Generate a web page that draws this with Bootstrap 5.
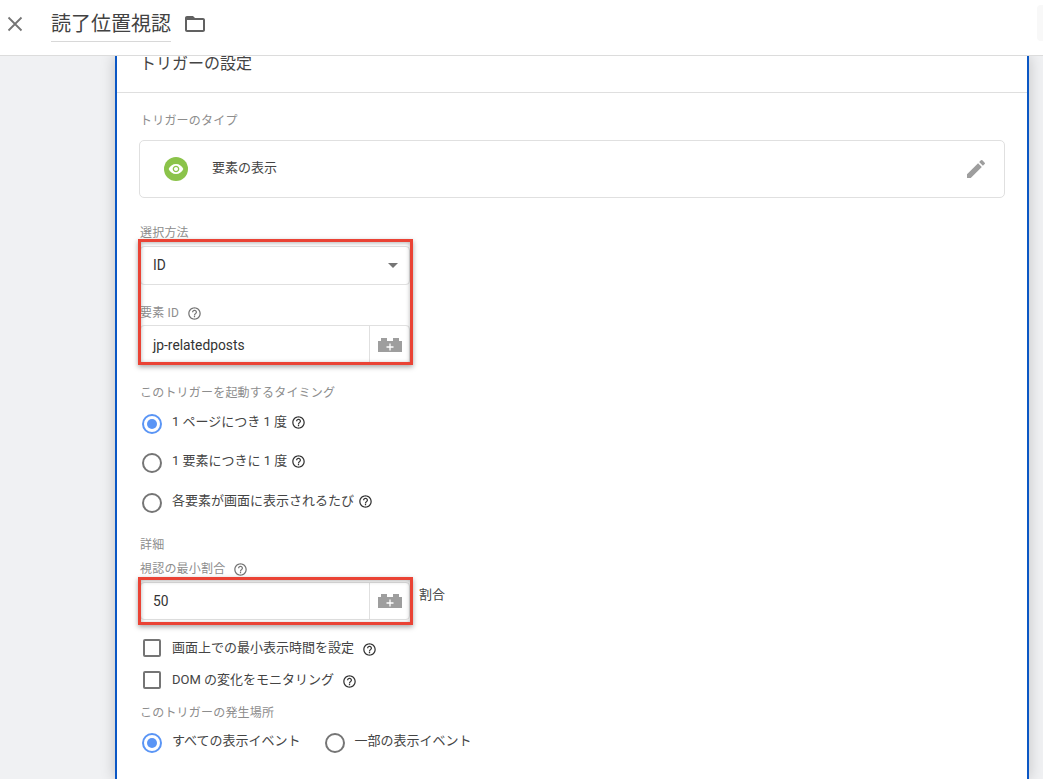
<!DOCTYPE html>
<html lang="ja">
<head>
<meta charset="utf-8">
<title>読了位置視認</title>
<link href="https://cdn.jsdelivr.net/npm/bootstrap@5.3.0/dist/css/bootstrap.min.css" rel="stylesheet">
<style>
html,body{height:779px;overflow:hidden}
body{background:#f0f1f3;font-family:Roboto,"Noto Sans CJK JP",sans-serif;color:#3c4043;font-size:13px}
.topbar{height:56px;background:#fff;border-bottom:1px solid #dcdcdc;position:relative;z-index:2}
.close-x{margin-left:7px;width:16px;height:16px}
.doc-title{margin-left:28px;font-size:20px;line-height:24px;height:30px;color:#424242;border-bottom:1px solid #d8d8d8;margin-top:12px;width:120px;white-space:nowrap}
.folder{margin-left:12px;margin-top:12px}
.stub{position:absolute;right:0;top:5px;width:6px;height:36px;background:#f8f8f8;border-radius:4px 0 0 4px}
.panel{margin-left:115px;width:914px;height:723px;background:#fff;border-left:2px solid #0b57c4;border-right:2px solid #0b57c4;box-shadow:0 0 14px rgba(0,0,0,.2)}
.panel-head{height:37px;border-bottom:1px solid #dfdfdf;padding-left:23px;font-size:16px;line-height:15px;color:#444}
.panel-body-x{padding-left:23px}
.lbl{font-size:12px;line-height:16px;color:#8d8d8d;letter-spacing:.2px}
.lbl-type{margin-top:20px}
.type-box{width:866px;height:58px;margin-top:11px;margin-left:-1px;border:1px solid #e0e0e0;border-radius:5px;padding:0 16px 0 24px}
.eye{width:24px;height:24px;background:#8bc34a;border-radius:50%}
.type-name{margin-left:24px;font-size:13px;color:#444;margin-top:-3px}
.lbl-method{margin-top:27px}
.field{width:270px;background:#fff;border:1px solid #e0e0e0;font-size:13.8px;color:#333}
.sel{height:39px;margin-top:5px;border-radius:4px;padding:0 11px 0 12px}
.caret{width:0;height:0;border-left:5px solid transparent;border-right:5px solid transparent;border-top:5px solid #757575}
.lbl-id{margin-top:20px}
.qm{margin-left:8px;flex:none}
.qm-low{margin-top:3px}
.inp{height:40px;padding-left:12px;border-radius:4px}
.inp-text{flex:1}
.inp-btn{width:40px;height:100%;border-left:1px solid #e0e0e0}
.anno{position:absolute;border:3px solid #ea4335;box-shadow:0 2px 5px rgba(0,0,0,.35),inset 0 1px 4px rgba(0,0,0,.3);pointer-events:none}
.anno-a{left:-2px;top:-7px;width:275px;height:126px}
.wrap-a,.wrap-b{position:relative}
.anno-b{left:-2px;top:-5px;width:275px;height:48px}
.lbl-when{margin-top:20px}
.opt{color:#444;font-size:13px;line-height:20px}
.opt-label{transform:translateY(-2px)}
.radio-o{width:20px;height:20px;border-radius:50%;border:2px solid #757575;margin-left:2px;margin-right:10px;flex:none;background:#fff}
.radio-on{border-color:#5a95f5;position:relative}
.radio-on::after{content:"";position:absolute;left:3px;top:3px;width:10px;height:10px;border-radius:50%;background:#5a95f5}
.opt-1{margin-top:13px}
.opt-2{margin-top:19px}
.opt-3{margin-top:20px}
.lbl-detail{margin-top:24px}
.lbl-min{margin-top:8px}
.wrap-b{margin-top:5px}
.wrap-b .field{height:38px}
.unit{margin-left:9px;margin-top:-12px;font-size:13px;color:#444}
.chk{width:18px;height:18px;border:2px solid #757575;border-radius:2px;margin-left:3px;margin-right:11px;flex:none}
.chk-1{margin-top:18px}
.chk-2{margin-top:12px}
.lbl-where{margin-top:15px}
.opt-4{margin-top:12px}
.second{margin-left:24px}
</style>
</head>
<body>
<header class="topbar d-flex align-items-start">
  <svg class="close-x mt-3" viewBox="0 0 16 16" fill="none" stroke="#757575" stroke-width="1.8"><path d="M1.5 1.5l13 13M14.500 1.500l-13 13"/></svg>
  <div class="doc-title">読了位置視認</div>
  <svg class="folder" width="24" height="24" viewBox="0 0 24 24" fill="#616161"><path d="M20 6h-8l-2-2H4c-1.100 0-2 .9-2 2v12c0 1.100.9 2 2 2h16c1.100 0 2-.9 2-2V8c0-1.100-.9-2-2-2zm0 12H4V8h16v10z"/></svg>
  <div class="stub"></div>
</header>
<main class="panel">
  <div class="panel-head">トリガーの設定</div>
  <div class="panel-body-x">
    <div class="lbl lbl-type">トリガーのタイプ</div>
    <div class="type-box d-flex align-items-center">
      <span class="eye d-flex align-items-center justify-content-center">
        <svg width="16" height="16" viewBox="0 0 24 24" fill="#fff"><path d="M12 4.500C7 4.500 2.730 7.610 1 12c1.730 4.390 6 7.500 11 7.500s9.270-3.110 11-7.500c-1.730-4.390-6-7.500-11-7.500zM12 17c-2.760 0-5-2.240-5-5s2.240-5 5-5 5 2.240 5 5-2.240 5-5 5zm0-8c-1.660 0-3 1.340-3 3s1.340 3 3 3 3-1.340 3-3-1.340-3-3-3z"/></svg>
      </span>
      <span class="type-name flex-grow-1">要素の表示</span>
      <svg width="24" height="24" viewBox="0 0 24 24" fill="#9e9e9e"><path d="M3 17.250V21h3.750L17.810 9.940l-3.750-3.750L3 17.250zM20.710 7.040a1 1 0 0 0 0-1.410l-2.340-2.340a1 1 0 0 0-1.410 0l-1.830 1.830 3.750 3.750 1.830-1.830z"/></svg>
    </div>

    <div class="lbl lbl-method">選択方法</div>
    <div class="wrap-a">
      <div class="anno anno-a"></div>
      <div class="field sel d-flex align-items-center justify-content-between"><span>ID</span><span class="caret"></span></div>
      <div class="lbl lbl-id d-flex align-items-center">要素 ID
        <svg class="qm" width="15" height="15" viewBox="0 0 24 24" fill="#757575"><path d="M11 18h2v-2h-2v2zm1-16C6.480 2 2 6.480 2 12s4.480 10 10 10 10-4.480 10-10S17.520 2 12 2zm0 18c-4.410 0-8-3.590-8-8s3.590-8 8-8 8 3.590 8 8-3.590 8-8 8zm0-14c-2.210 0-4 1.790-4 4h2c0-1.100.9-2 2-2s2 .9 2 2c0 2-3 1.750-3 5h2c0-2.250 3-2.500 3-5 0-2.210-1.790-4-4-4z"/></svg>
      </div>
      <div class="field inp d-flex align-items-center mt-1">
        <span class="inp-text">jp-relatedposts</span>
        <span class="inp-btn d-flex align-items-center justify-content-center">
          <svg width="24" height="14" viewBox="0 0 24 14"><path fill="#9e9e9e" d="M0 3h3V0h6v3h6V0h6v3h3v11H0z"/><path stroke="#fff" stroke-width="1.300" d="M12 5.500v7M8.500 9h7"/></svg>
        </span>
      </div>
    </div>

    <div class="lbl lbl-when">このトリガーを起動するタイミング</div>
    <div class="opt opt-1 d-flex align-items-center"><span class="radio-o radio-on"></span><span class="opt-label d-flex align-items-center">1 ページにつき 1 度
      <svg class="qm ms-1" width="15" height="15" viewBox="0 0 24 24" fill="#333"><path d="M11 18h2v-2h-2v2zm1-16C6.480 2 2 6.480 2 12s4.480 10 10 10 10-4.480 10-10S17.520 2 12 2zm0 18c-4.410 0-8-3.590-8-8s3.590-8 8-8 8 3.590 8 8-3.590 8-8 8zm0-14c-2.210 0-4 1.790-4 4h2c0-1.100.9-2 2-2s2 .9 2 2c0 2-3 1.750-3 5h2c0-2.250 3-2.500 3-5 0-2.210-1.790-4-4-4z"/></svg></span>
    </div>
    <div class="opt opt-2 d-flex align-items-center"><span class="radio-o"></span><span class="opt-label d-flex align-items-center">1 要素につきに 1 度
      <svg class="qm ms-1" width="15" height="15" viewBox="0 0 24 24" fill="#333"><path d="M11 18h2v-2h-2v2zm1-16C6.480 2 2 6.480 2 12s4.480 10 10 10 10-4.480 10-10S17.520 2 12 2zm0 18c-4.410 0-8-3.590-8-8s3.590-8 8-8 8 3.590 8 8-3.590 8-8 8zm0-14c-2.210 0-4 1.790-4 4h2c0-1.100.9-2 2-2s2 .9 2 2c0 2-3 1.750-3 5h2c0-2.250 3-2.500 3-5 0-2.210-1.790-4-4-4z"/></svg></span>
    </div>
    <div class="opt opt-3 d-flex align-items-center"><span class="radio-o"></span><span class="opt-label d-flex align-items-center">各要素が画面に表示されるたび
      <svg class="qm ms-1" width="15" height="15" viewBox="0 0 24 24" fill="#333"><path d="M11 18h2v-2h-2v2zm1-16C6.480 2 2 6.480 2 12s4.480 10 10 10 10-4.480 10-10S17.520 2 12 2zm0 18c-4.410 0-8-3.590-8-8s3.590-8 8-8 8 3.590 8 8-3.590 8-8 8zm0-14c-2.210 0-4 1.790-4 4h2c0-1.100.9-2 2-2s2 .9 2 2c0 2-3 1.750-3 5h2c0-2.250 3-2.500 3-5 0-2.210-1.790-4-4-4z"/></svg></span>
    </div>

    <div class="lbl lbl-detail">詳細</div>
    <div class="lbl lbl-min d-flex align-items-center">視認の最小割合
      <svg class="qm" width="15" height="15" viewBox="0 0 24 24" fill="#757575"><path d="M11 18h2v-2h-2v2zm1-16C6.480 2 2 6.480 2 12s4.480 10 10 10 10-4.480 10-10S17.520 2 12 2zm0 18c-4.410 0-8-3.590-8-8s3.590-8 8-8 8 3.590 8 8-3.590 8-8 8zm0-14c-2.210 0-4 1.790-4 4h2c0-1.100.9-2 2-2s2 .9 2 2c0 2-3 1.750-3 5h2c0-2.250 3-2.500 3-5 0-2.210-1.790-4-4-4z"/></svg>
    </div>
    <div class="wrap-b d-flex align-items-center">
      <div class="anno anno-b"></div>
      <div class="field inp d-flex align-items-center">
        <span class="inp-text">50</span>
        <span class="inp-btn d-flex align-items-center justify-content-center">
          <svg width="24" height="14" viewBox="0 0 24 14"><path fill="#9e9e9e" d="M0 3h3V0h6v3h6V0h6v3h3v11H0z"/><path stroke="#fff" stroke-width="1.300" d="M12 5.500v7M8.500 9h7"/></svg>
        </span>
      </div>
      <span class="unit">割合</span>
    </div>

    <div class="opt chk-1 d-flex align-items-center"><span class="chk"></span>画面上での最小表示時間を設定
      <svg class="qm qm-low" width="15" height="15" viewBox="0 0 24 24" fill="#333"><path d="M11 18h2v-2h-2v2zm1-16C6.480 2 2 6.480 2 12s4.480 10 10 10 10-4.480 10-10S17.520 2 12 2zm0 18c-4.410 0-8-3.590-8-8s3.590-8 8-8 8 3.590 8 8-3.590 8-8 8zm0-14c-2.210 0-4 1.790-4 4h2c0-1.100.9-2 2-2s2 .9 2 2c0 2-3 1.750-3 5h2c0-2.250 3-2.500 3-5 0-2.210-1.790-4-4-4z"/></svg>
    </div>
    <div class="opt chk-2 d-flex align-items-center"><span class="chk"></span>DOM の変化をモニタリング
      <svg class="qm qm-low" width="15" height="15" viewBox="0 0 24 24" fill="#333"><path d="M11 18h2v-2h-2v2zm1-16C6.480 2 2 6.480 2 12s4.480 10 10 10 10-4.480 10-10S17.520 2 12 2zm0 18c-4.410 0-8-3.590-8-8s3.590-8 8-8 8 3.590 8 8-3.590 8-8 8zm0-14c-2.210 0-4 1.790-4 4h2c0-1.100.9-2 2-2s2 .9 2 2c0 2-3 1.750-3 5h2c0-2.250 3-2.500 3-5 0-2.210-1.790-4-4-4z"/></svg>
    </div>

    <div class="lbl lbl-where">このトリガーの発生場所</div>
    <div class="opt opt-4 d-flex align-items-center">
      <span class="radio-o radio-on"></span><span class="opt-label">すべての表示イベント</span>
      <span class="radio-o second"></span><span class="opt-label">一部の表示イベント</span>
    </div>
  </div>
</main>
<script src="https://cdn.jsdelivr.net/npm/bootstrap@5.3.0/dist/js/bootstrap.bundle.min.js"></script>
</body>
</html>
